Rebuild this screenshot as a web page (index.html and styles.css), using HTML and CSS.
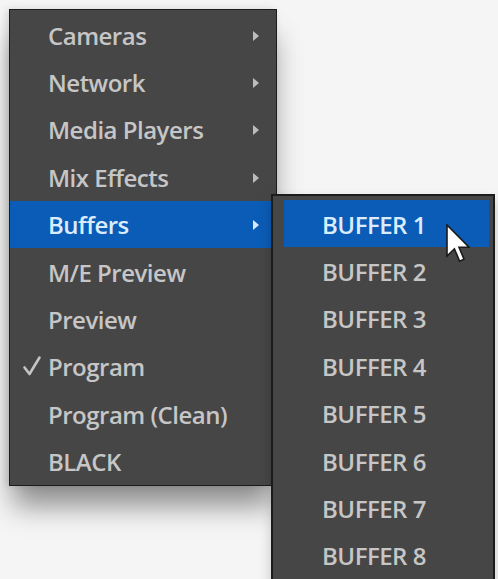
FILE: index.html
```html
<!DOCTYPE html>
<html>
<head>
<meta charset="utf-8">
<link rel="stylesheet" href="styles.css">
</head>
<body>
<div class="stage">
  <ul class="menu main">
    <li class="item has-sub"><span class="label">Cameras</span><span class="arrow"></span></li>
    <li class="item has-sub"><span class="label">Network</span><span class="arrow"></span></li>
    <li class="item has-sub"><span class="label">Media Players</span><span class="arrow"></span></li>
    <li class="item has-sub"><span class="label">Mix Effects</span><span class="arrow"></span></li>
    <li class="item has-sub active"><span class="label">Buffers</span><span class="arrow"></span></li>
    <li class="item"><span class="label">M/E Preview</span></li>
    <li class="item"><span class="label">Preview</span></li>
    <li class="item checked"><svg class="check" width="20" height="22" viewBox="0 0 20 22"><path d="M2.5 12.5 L7.5 19 L17.5 2.5" fill="none" stroke="#c4c4c4" stroke-width="2.6" stroke-linecap="round" stroke-linejoin="round"/></svg><span class="label">Program</span></li>
    <li class="item"><span class="label">Program (Clean)</span></li>
    <li class="item"><span class="label">BLACK</span></li>
  </ul>
  <ul class="menu sub">
    <li class="item active"><span class="label">BUFFER 1</span></li>
    <li class="item"><span class="label">BUFFER 2</span></li>
    <li class="item"><span class="label">BUFFER 3</span></li>
    <li class="item"><span class="label">BUFFER 4</span></li>
    <li class="item"><span class="label">BUFFER 5</span></li>
    <li class="item"><span class="label">BUFFER 6</span></li>
    <li class="item"><span class="label">BUFFER 7</span></li>
    <li class="item"><span class="label">BUFFER 8</span></li>
  </ul>
  <svg class="cursor" width="24" height="40" viewBox="0 0 12 20">
    <path d="M0.5 0.5 L0.5 16 L4.2 12.4 L6.8 18.6 L9 17.6 L6.5 11.6 L11.5 11.6 Z" fill="#ffffff" stroke="#1a1a1a" stroke-width="0.8" stroke-linejoin="miter"/>
  </svg>
</div>
</body>
</html>
```
FILE: styles.css
```css
html, body {
  margin: 0;
  padding: 0;
  background: #f5f5f5;
  overflow: hidden;
}
.stage {
  position: relative;
  width: 498px;
  height: 579px;
  padding: 9px 0 0 9px;
  box-sizing: border-box;
  font-family: "Open Sans", "DejaVu Sans", sans-serif;
  font-size: 24px;
  font-weight: 600;
  letter-spacing: -0.5px;
}
.menu {
  list-style: none;
  margin: 0;
  background: #464646;
  border: 1px solid #1c1c1c;
  box-sizing: border-box;
}
.main {
  width: 268px;
  padding: 1px 0 0 0;
  box-shadow: 0 24px 26px -4px rgba(0,0,0,0.42), -3px 0 8px rgba(0,0,0,0.12);
}
.item {
  display: flex;
  align-items: center;
  height: 47.4px;
  color: #c6c6c6;
  position: relative;
}
.main .item {
  padding-left: 38px;
  padding-right: 17px;
}
.label {
  flex: 1;
  white-space: nowrap;
  line-height: 1;
  padding-top: 2px;
}
.item.active {
  background: #0b5cb6;
  color: #dcecff;
}
.arrow {
  width: 0;
  height: 0;
  border-top: 5px solid transparent;
  border-bottom: 5px solid transparent;
  border-left: 6px solid #bcbcbc;
  margin-top: 2px;
}
.item.active .arrow {
  border-left-color: #d6e8ff;
}
.check {
  position: absolute;
  left: 12px;
  top: 12px;
}
.sub {
  position: absolute;
  left: 271px;
  top: 194px;
  width: 224px;
  height: 420px;
  padding: 4px 4px 0 11px;
  border-width: 2px;
  box-shadow: 0 6px 12px rgba(0,0,0,0.2);
}
.sub .item {
  padding-left: 38px;
}
.cursor {
  position: absolute;
  left: 446px;
  top: 224px;
}
```
